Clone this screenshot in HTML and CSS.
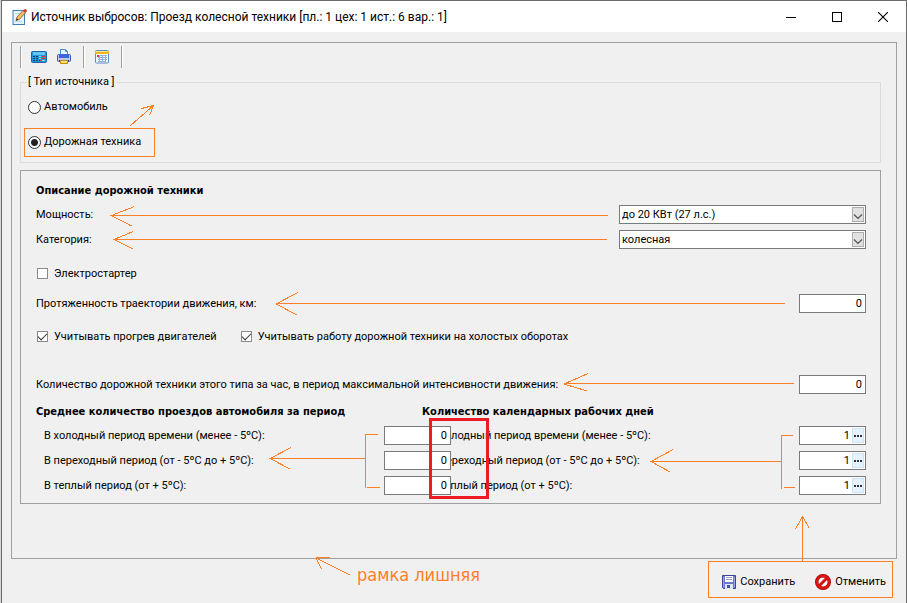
FILE: index.html
```html
<!DOCTYPE html>
<html lang="ru">
<head>
<meta charset="utf-8">
<title>Источник выбросов: Проезд колесной техники</title>
<link rel="stylesheet" href="styles.css">
</head>
<body>
<div class="window">
  <header class="titlebar">
    <svg class="app-icon" width="16" height="18" viewBox="0 0 16 18" aria-hidden="true">
      <rect x="1" y="2.5" width="11.5" height="14" fill="#e6f3fc" stroke="#3f7fb5"/>
      <path d="M3 5.500h5M3 13.500h7" stroke="#b9dcf2"/>
      <path d="M4 12.500l1-3.500 6-6.500 2.500 2.300-6.200 6.700z" fill="#f4b860" stroke="#8a5a2a" stroke-width=".8"/>
      <path d="M4 12.500l.8-2.300 1.600 1.500z" fill="#333"/>
      <path d="M11 2.500l1.300-1.200q1-.7 2 .3t.4 2l-1.200 1.200z" fill="#d3402c"/>
    </svg>
    <h1 class="title">Источник выбросов: Проезд колесной техники [пл.: 1 цех: 1 ист.: 6 вар.: 1]</h1>
    <div class="controls">
      <button type="button" class="control" aria-label="Свернуть"><svg width="10" height="10" viewBox="0 0 10 10"><path d="M0 5.500h10" stroke="#000"/></svg></button>
      <button type="button" class="control" aria-label="Развернуть"><svg width="10" height="10" viewBox="0 0 10 10"><rect x=".5" y=".5" width="9" height="9" fill="none" stroke="#000"/></svg></button>
      <button type="button" class="control" aria-label="Закрыть"><svg width="10" height="10" viewBox="0 0 10 10"><path d="M0 0l10 10M10 0L0 10" stroke="#000" stroke-width="1.100"/></svg></button>
    </div>
  </header>

  <form class="client">
    <main class="frame">
      <div class="toolbar">
        <div class="tool-group">
          <button type="button" class="tool" aria-label="Расчет">
            <svg width="16" height="14" viewBox="0 0 16 14">
              <rect x=".5" y="1.500" width="15" height="11" rx="1" fill="#2196dc" stroke="#1b62a5"/>
              <rect x="2" y="2" width="12" height="3" fill="#63c7f5"/>
              <path d="M2 6.500h2M5 6.500h2M2 8.500h2M5 8.500h2M2 10.500h2M5 10.500h2M8 10.500h1" stroke="#173d6b"/>
              <path d="M8 6.500h2M8 8.500h2M11 10.500h3" stroke="#9fd9f7"/>
              <path d="M11 6.500h3M11 8.500h3M9 10.500h2" stroke="#e5372c"/>
            </svg>
          </button>
          <button type="button" class="tool" aria-label="Печать">
            <svg width="16" height="16" viewBox="0 0 16 16">
              <path d="M4.500 5.500v-5h5l2 2v3z" fill="#e8f4ff" stroke="#4b86c9"/>
              <path d="M9.500.5v2h2" fill="none" stroke="#4b86c9"/>
              <rect x="1.500" y="5.500" width="13" height="7" rx="1" fill="#b9c8f3" stroke="#4055b0"/>
              <rect x="3" y="5" width="10" height="4" fill="#3e63d8"/>
              <path d="M3 11.500h10" stroke="#26398c"/>
              <rect x="4.500" y="11.500" width="7" height="3" fill="#ffe36b" stroke="#c98d17"/>
            </svg>
          </button>
        </div>
        <div class="tool-group">
          <button type="button" class="tool" aria-label="Таблица">
            <svg width="14" height="14" viewBox="0 0 14 14">
              <rect x=".5" y=".5" width="13" height="12.500" rx="1" fill="#f4faff" stroke="#5c8bc7"/>
              <path d="M0 1h14v3H0z" fill="#f0b51f"/>
              <path d="M1 1.500h12" stroke="#ffe37a"/>
              <path d="M5 5.500h7M3 7.500h9M3 9.500h9M3 11.500h7M4.500 5v7M7.500 5v7M10.500 5v7" stroke="#8fb3dd"/>
              <path d="M2 5h2v2H2z" fill="#e5372c"/>
            </svg>
          </button>
        </div>
      </div>

      <fieldset class="kind">
        <legend>[ Тип источника ]</legend>
        <label class="option"><input type="radio" name="kind">Автомобиль</label>
        <label class="option"><input type="radio" name="kind" checked>Дорожная техника</label>
      </fieldset>

      <section class="details">
        <h2>Описание дорожной техники</h2>
        <div class="row">
          <label for="power">Мощность:</label>
          <span class="combo">
            <select id="power"><option>до 20 КВт (27 л.с.)</option></select>
            <svg class="arrow" width="12" height="15" viewBox="0 0 12 15" aria-hidden="true"><rect x=".5" y=".5" width="11" height="14" fill="#e1e1e1" stroke="#adadad"/><path d="M2 7.500l4 4 4-4" fill="none" stroke="#555" stroke-width="1.200"/></svg>
          </span>
        </div>
        <div class="row">
          <label for="category">Категория:</label>
          <span class="combo">
            <select id="category"><option>колесная</option></select>
            <svg class="arrow" width="12" height="15" viewBox="0 0 12 15" aria-hidden="true"><rect x=".5" y=".5" width="11" height="14" fill="#e1e1e1" stroke="#adadad"/><path d="M2 7.500l4 4 4-4" fill="none" stroke="#555" stroke-width="1.200"/></svg>
          </span>
        </div>
        <div class="checks starter">
          <label class="check"><input type="checkbox">Электростартер</label>
        </div>
        <div class="row length">
          <label for="length">Протяженность траектории движения, км:</label>
          <input class="number" id="length" type="text" value="0">
        </div>
        <div class="checks modes">
          <label class="check"><input type="checkbox" checked>Учитывать прогрев двигателей</label>
          <label class="check"><input type="checkbox" checked>Учитывать работу дорожной техники на холостых оборотах</label>
        </div>
        <div class="row peak">
          <label for="peak">Количество дорожной техники этого типа за час, в период максимальной интенсивности движения:</label>
          <input class="number" id="peak" type="text" value="0">
        </div>
        <div class="periods">
          <div class="period trips">
            <h2>Среднее количество проездов автомобиля за период</h2>
            <div class="row"><label for="t1">В холодный период времени (менее - 5ºС):</label><input class="number" id="t1" type="text" value="0"></div>
            <div class="row"><label for="t2">В переходный период (от - 5ºС до + 5ºС):</label><input class="number" id="t2" type="text" value="0"></div>
            <div class="row"><label for="t3">В теплый период (от + 5ºС):</label><input class="number" id="t3" type="text" value="0"></div>
          </div>
          <div class="period days">
            <h2>Количество календарных рабочих дней</h2>
            <div class="row"><label for="d1">В холодный период времени (менее - 5ºС):</label><span class="picker"><input id="d1" type="text" value="1"><button type="button" aria-label="Выбрать"><i></i><i></i><i></i></button></span></div>
            <div class="row"><label for="d2">В переходный период (от - 5ºС до + 5ºС):</label><span class="picker"><input id="d2" type="text" value="1"><button type="button" aria-label="Выбрать"><i></i><i></i><i></i></button></span></div>
            <div class="row"><label for="d3">В теплый период (от + 5ºС):</label><span class="picker"><input id="d3" type="text" value="1"><button type="button" aria-label="Выбрать"><i></i><i></i><i></i></button></span></div>
          </div>
        </div>
      </section>
    </main>

    <footer class="actions">
      <button type="button" class="action">
        <svg width="14" height="14" viewBox="0 0 14 14" aria-hidden="true">
          <path d="M.5.5h13v13h-12l-1-1z" fill="#6d76d0" stroke="#3d4299"/>
          <rect x="3" y="1" width="8" height="6" fill="#fff"/>
          <path d="M4 2.500h6M4 4.500h6" stroke="#9aa3c9"/>
          <path d="M1.500 2v10M12.500 2v10" stroke="#98a6ec"/>
          <rect x="3" y="9" width="8" height="5" fill="#dfe5f5"/>
          <rect x="5" y="10" width="3" height="3" fill="#4351ab"/>
        </svg>
        <span>Сохранить</span>
      </button>
      <button type="button" class="action">
        <svg width="16" height="16" viewBox="0 0 16 16" aria-hidden="true">
          <circle cx="8" cy="8" r="6.300" fill="#fff" stroke="#8f0808" stroke-width="3.400"/>
          <circle cx="8" cy="8" r="6.200" fill="none" stroke="#e01414" stroke-width="2.400"/>
          <path d="M4 12l8-8" stroke="#d41111" stroke-width="3"/>
        </svg>
        <span>Отменить</span>
      </button>
    </footer>
  </form>

  <svg class="marks" width="907" height="603" viewBox="0 0 907 603" aria-hidden="true">
    <g class="pen">
      <path d="M130.500 125.500l23-20M141.500 108.500l12-3-4 10"/>
      <rect x="24.500" y="128.500" width="130" height="28"/>
      <path d="M608 215.500H111M134.500 206.500l-23 9 20 10.500"/>
      <path d="M607 239.500H114M133 231.500l-19 8 19 9.500"/>
      <path d="M785 303.500H276M298 292.500l-22 11.500 21 11"/>
      <path d="M794 383.500H565M588 373.500l-24 10.500 23 7"/>
      <path d="M378 434.500h-12.500V488M367 487.500h13M365 458.500h-94M291 447.500l-21 11 20 10.500"/>
      <path d="M793 435.500h-11.500V489M784 487.500h11M781 461.500H652M673 449.500l-22 12 19 10.500"/>
      <path d="M802.500 561v-44M795.500 529l7-12.500 7 12"/>
      <path d="M350 575l-34-17M330 557.500l-14 .5 5.500 11"/>
      <rect x="708.500" y="561.500" width="184" height="36"/>
    </g>
    <rect class="alert" x="430.500" y="419.500" width="57" height="78"/>
  </svg>
  <p class="note">рамка лишняя</p>
</div>
</body>
</html>
```
FILE: styles.css
```css
* { box-sizing: border-box; }

body {
  margin: 0;
  background: #d4d4d4 repeating-linear-gradient(to bottom, transparent 0 11px, #9a9a9a 11px 12px, transparent 12px 16px);
  font-family: Roboto, "Noto Sans", sans-serif;
  font-size: 11px;
  line-height: 14px;
  color: #000;
}

input, select, button { font: inherit; color: inherit; margin: 0; }
button { padding: 0; border: 0; background: none; }
svg { display: block; flex: none; }

.window {
  position: relative;
  display: flex;
  flex-direction: column;
  min-height: 100vh;
  margin-left: 1px;
  border: solid #6b6b6b;
  border-width: 1px 1px 0;
  outline: 1px solid #d4d4d4;
  background: #f0f0f0;
}

.titlebar {
  display: flex;
  align-items: center;
  height: 31px;
  padding-left: 10px;
  background: #fff;
}
.title {
  flex: 1;
  margin: 0 0 0 3px;
  font: 12px/16px Roboto, "Noto Sans", sans-serif;
}
.controls { display: flex; }
.control { display: grid; place-items: center; width: 46px; height: 30px; }

.client { display: flex; flex: 1; flex-direction: column; padding: 10px 9px 0; }

.frame {
  flex: 1;
  padding: 3px 15px 0 8px;
  border: 1px solid #a0a0a0;
}

.toolbar { display: flex; height: 22px; }
.tool-group {
  display: flex;
  align-items: center;
  gap: 9px;
  padding: 0 11px 0 10px;
  border-left: 1px solid #a0a0a0;
  box-shadow: inset 1px 0 #fff;
}
.tool-group:last-child {
  padding: 0 12px 0 11px;
  border-right: 1px solid #a0a0a0;
  box-shadow: inset 1px 0 #fff, 1px 0 #fff;
}

.kind {
  margin: 7px 0 0;
  padding: 11px 8px 13px 7px;
  border: 1px solid #dcdcdc;
}
.kind legend { padding: 0 1px 0 0; }
.option { display: flex; align-items: center; gap: 3px; width: max-content; }
.option + .option { margin-top: 21px; }
.option input {
  appearance: none;
  width: 13px;
  height: 13px;
  border: 1px solid #333;
  border-radius: 50%;
  background: #fff;
}
.option input:checked { background: radial-gradient(circle, #222 0 3px, #fff 4px); }

.details {
  margin-top: 7px;
  padding: 11px 14px 8px 15px;
  border: 1px solid #a0a0a0;
}
h2 {
  margin: 0;
  font-family: "DejaVu Sans Condensed", "DejaVu Sans", sans-serif;
  font-stretch: condensed;
  font-size: 11px;
  line-height: 17px;
  font-weight: bold;
}

.row { display: flex; align-items: center; justify-content: space-between; height: 19px; margin-top: 6px; }

.combo { position: relative; width: 247px; }
.combo select {
  display: block;
  appearance: none;
  width: 100%;
  height: 19px;
  padding: 0 16px 0 2px;
  border: 1px solid #7a7a7a;
  border-radius: 0;
  background: #fff;
}
.arrow { position: absolute; top: 2px; right: 2px; pointer-events: none; }

.checks { display: flex; align-items: center; gap: 23px; height: 19px; }
.check { display: flex; align-items: center; gap: 6px; padding-left: 1px; }
.check input {
  appearance: none;
  display: grid;
  place-items: center;
  width: 11px;
  height: 11px;
  border: 1px solid #8a8a8a;
  background: #fff;
}
.check input:checked::before {
  content: "";
  width: 8px;
  height: 4px;
  margin-bottom: 3px;
  border: solid #333;
  border-width: 0 0 1px 1px;
  transform: rotate(-45deg);
}
.starter { margin-top: 15px; }
.length { margin-top: 11px; }
.modes { margin-top: 14px; }
.peak { margin-top: 29px; }

.number, .picker {
  width: 67px;
  height: 19px;
  border: 1px solid #7a7a7a;
  background: #fff;
}
.number { padding: 0 3px; text-align: right; }

.periods { display: grid; grid-template-columns: 386px 1fr; margin-top: 9px; }
.period .row { padding-left: 8px; }
/* The trip inputs run over the start of the neighbouring labels. */
.trips { position: relative; z-index: 1; margin-right: -29px; }

.picker { display: flex; padding: 1px; }
.picker input { flex: 1; min-width: 0; padding: 0 2px; border: 0; text-align: right; background: none; }
.picker button {
  display: flex;
  align-items: center;
  justify-content: center;
  gap: 1px;
  width: 12px;
  border: 1px solid #cce4f7;
  background: #e5f1fb;
}
.picker i { width: 2px; height: 2px; background: #333; }

.actions { display: flex; justify-content: flex-end; gap: 20px; height: 44px; padding: 0 11px 0 0; }
.action { display: flex; align-items: center; gap: 4px; height: 46px; }

.marks { position: absolute; top: -1px; left: -2px; z-index: 2; pointer-events: none; shape-rendering: crispEdges; }
.pen { fill: none; stroke: #ff7f27; }
.alert { fill: none; stroke: #ed1c24; stroke-width: 3; }
.note {
  position: absolute;
  top: 562px;
  left: 355px;
  z-index: 2;
  margin: 0;
  font-family: "DejaVu Sans Condensed", "DejaVu Sans", sans-serif;
  font-stretch: condensed;
  font-size: 18px;
  line-height: 24px;
  color: #ff7f27;
}
```
